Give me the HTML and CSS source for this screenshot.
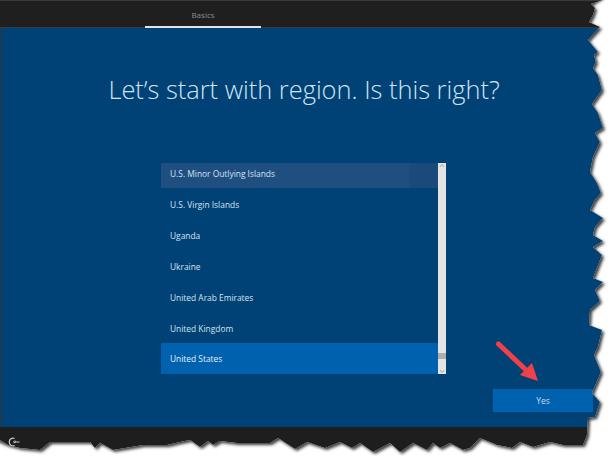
FILE: index.html
```html
<!DOCTYPE html>
<html lang="en">
<head>
<meta charset="utf-8">
<title>Region</title>
<link rel="stylesheet" href="styles.css">
</head>
<body>
<div class="screen">
  <header class="topbar"><div class="tab">Basics</div></header>
  <main class="panel">
    <h1 class="title">Let’s start with region. Is this right?</h1>
    <div class="listwrap">
      <ul class="list">
        <li class="row hover">U.S. Minor Outlying Islands</li>
        <li class="row">U.S. Virgin Islands</li>
        <li class="row">Uganda</li>
        <li class="row">Ukraine</li>
        <li class="row">United Arab Emirates</li>
        <li class="row">United Kingdom</li>
        <li class="row selected">United States</li>
      </ul>
      <div class="scrollbar">
        <svg class="arrow" viewBox="0 0 8 5" width="8" height="5"><path d="M2 4l2-2.500L6 4" fill="none" stroke="#aaa" stroke-width="1"/></svg>
        <div class="track"></div>
        <div class="thumb"></div>
        <svg class="arrow" viewBox="0 0 8 5" width="8" height="5"><path d="M2 1l2 2.500L6 1" fill="none" stroke="#aaa" stroke-width="1"/></svg>
      </div>
    </div>
    <div class="actions"><button class="yes">Yes</button></div>
  </main>
  <footer class="bottombar">
    <svg class="ease" viewBox="0 0 12 10" width="12" height="10"><path d="M6.500 1.500A3.800 3.800 0 1 0 6.500 8.500" fill="none" stroke="#c4ccd4" stroke-width="1.200"/><path d="M5 4.500L7 6 7 3.500M7 5H11.500" fill="none" stroke="#c4ccd4" stroke-width="1"/></svg>
  </footer>
  <svg class="overlay" viewBox="0 0 616 464" width="616" height="464">
    <defs>
      <filter id="soft" x="-5%" y="-5%" width="110%" height="110%"><feGaussianBlur stdDeviation="1.500"/></filter>
      <clipPath id="outside"><path d="M616 0H603L591 4 595 8 593 15 589 22 600 27 588 40 598 52 594 55 596 62 593 68 598 75 602 90 592 104 598 113 603 128 595 133 600 142 593 157 590 172 597 183 601 193 595 200 590 210 603 218 595 227 593 235 603 241 593 247 602 255 593 278 603 282 595 290 600 301 590 310 589 325 602 330 598 347 594 355 601 372 592 393 600 402 595 417 588 418 587 435 583 445 563 445 550 442 533 447 520 442 512 448 497 445 480 438 470 448 463 450 450 443 440 448 433 443 427 450 413 443 400 452 390 443 373 452 360 443 352 448 340 442 325 448 307 442 295 449 278 438 270 443 237 443 220 441 213 445 208 441 200 447 190 440 180 442 167 445 143 445 113 450 100 443 95 448 90 442 50 442 40 450 20 448 8 445 0 440V464H616Z"/></clipPath>
    </defs>
    <path class="torn-paper" d="M616 0H603L591 4 595 8 593 15 589 22 600 27 588 40 598 52 594 55 596 62 593 68 598 75 602 90 592 104 598 113 603 128 595 133 600 142 593 157 590 172 597 183 601 193 595 200 590 210 603 218 595 227 593 235 603 241 593 247 602 255 593 278 603 282 595 290 600 301 590 310 589 325 602 330 598 347 594 355 601 372 592 393 600 402 595 417 588 418 587 435 583 445 563 445 550 442 533 447 520 442 512 448 497 445 480 438 470 448 463 450 450 443 440 448 433 443 427 450 413 443 400 452 390 443 373 452 360 443 352 448 340 442 325 448 307 442 295 449 278 438 270 443 237 443 220 441 213 445 208 441 200 447 190 440 180 442 167 445 143 445 113 450 100 443 95 448 90 442 50 442 40 450 20 448 8 445 0 440V464H616Z"/>
    <g clip-path="url(#outside)">
      <path class="torn-shadow" filter="url(#soft)" transform="translate(2 2)" d="M0 -4H603L591 4 595 8 593 15 589 22 600 27 588 40 598 52 594 55 596 62 593 68 598 75 602 90 592 104 598 113 603 128 595 133 600 142 593 157 590 172 597 183 601 193 595 200 590 210 603 218 595 227 593 235 603 241 593 247 602 255 593 278 603 282 595 290 600 301 590 310 589 325 602 330 598 347 594 355 601 372 592 393 600 402 595 417 588 418 587 435 583 445 563 445 550 442 533 447 520 442 512 448 497 445 480 438 470 448 463 450 450 443 440 448 433 443 427 450 413 443 400 452 390 443 373 452 360 443 352 448 340 442 325 448 307 442 295 449 278 438 270 443 237 443 220 441 213 445 208 441 200 447 190 440 180 442 167 445 143 445 113 450 100 443 95 448 90 442 50 442 40 450 20 448 8 445 -4 440Z"/>
    </g>
    <path class="arrow-stem" d="M498.500 344L526 370"/>
    <path class="arrow-head" d="M538 381L520 375 532 363Z"/>
  </svg>
</div>
</body>
</html>
```
FILE: styles.css
```css
html, body { margin: 0; padding: 0; background: #fff; }
.screen {
  position: relative;
  width: 616px;
  height: 464px;
  overflow: hidden;
  display: flex;
  flex-direction: column;
  font-family: "Open Sans", "Liberation Sans", sans-serif;
  background: #1e1e1e;
}
.topbar {
  height: 26px;
  flex: none;
  display: flex;
  background: #1f1f1f;
  border-top: 1px solid #3a3a3a;
  border-bottom: 1px solid #383838;
}
.tab {
  margin-left: 145px;
  width: 116px;
  height: 27px;
  flex: none;
  align-self: flex-start;
  box-sizing: border-box;
  border-bottom: 2px solid #e4e4e4;
  color: #8d8d8d;
  font-size: 8px;
  line-height: 27px;
  text-align: center;
}
.panel {
  height: 399px;
  flex: none;
  background: #004275;
  display: flex;
  flex-direction: column;
  box-sizing: border-box;
  border-left: 1px solid #333;
}
.title {
  margin: 46px 0 0;
  font-weight: 300;
  font-family: "Open Sans", sans-serif;
  font-size: 25.4px;
  line-height: 30px;
  color: #d0e4f2;
  text-align: center;
  padding-right: 9px;
}
.listwrap {
  margin: 59px 0 0 160px;
  display: flex;
  width: 285px;
  height: 211px;
}
.list {
  list-style: none;
  margin: 0;
  padding: 0;
  width: 277px;
  height: 211px;
  overflow: hidden;
  flex: none;
}
.row {
  height: 31px;
  line-height: 34px;
  padding-left: 9px;
  font-size: 8.4px;
  color: #d5e4ef;
}
.row.hover {
  margin-top: -6px;
  background: linear-gradient(to right, #1f4e80 248px, #1a4a7c 248px);
}
.row.selected {
  line-height: 32px;
  background: #0061ae;
  color: #e6f0f8;
}
.scrollbar {
  width: 8px;
  flex: none;
  background: #e4e4e4;
  display: flex;
  flex-direction: column;
  height: 211px;
}
.arrow { flex: none; display: block; }
.track { flex: 1; }
.thumb { height: 6px; margin-bottom: 10px; background: #aeaeae; flex: none; }
.actions {
  margin-top: 15px;
  padding-left: 492px;
  display: flex;
}
.yes {
  width: 100px;
  height: 23px;
  border: 0;
  padding: 0;
  background: #0061ae;
  color: #c8dcec;
  font-family: "Open Sans", sans-serif;
  font-size: 8.5px;
}
.bottombar {
  flex: 1;
  background: #1e1e1e;
  padding: 10px 0 0 8px;
}
.ease { display: block; }
.overlay { position: absolute; left: 0; top: 0; pointer-events: none; }
.torn-shadow { fill: #3a3a3a; }
.torn-paper { fill: #fff; }
.arrow-stem { stroke: #f0404a; stroke-width: 5; stroke-linecap: round; fill: none; }
.arrow-head { fill: #f0404a; }
```
